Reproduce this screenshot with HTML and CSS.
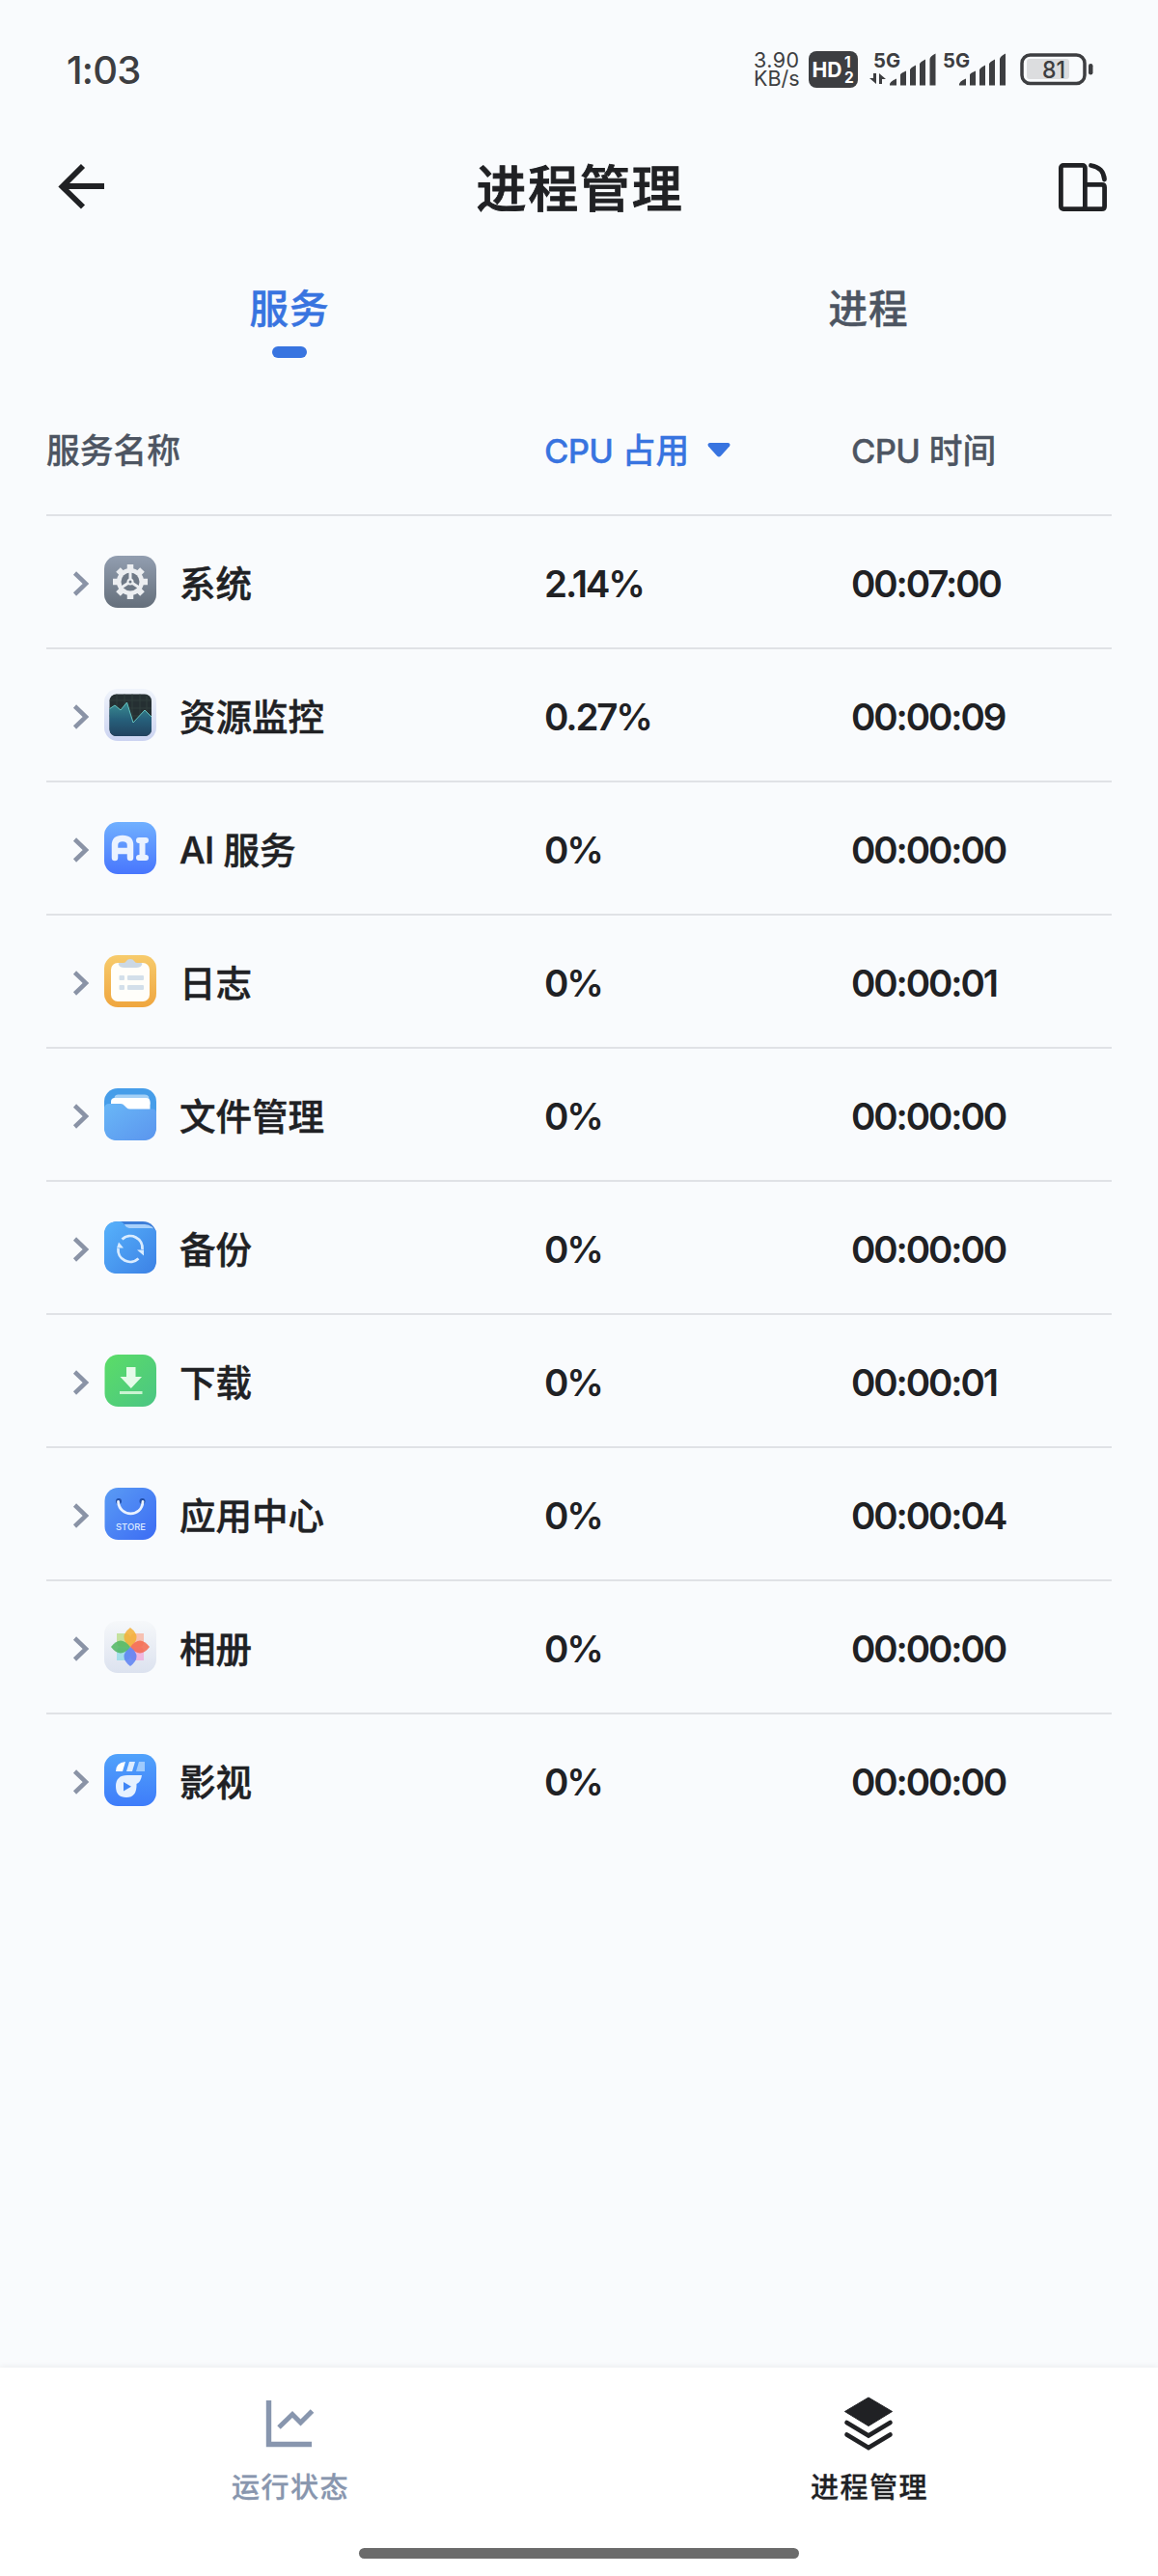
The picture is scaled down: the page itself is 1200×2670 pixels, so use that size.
FILE: index.html
```
<!DOCTYPE html>
<html lang="zh">
<head>
    <meta charset="UTF-8">
    <title>进程管理</title>
    <link rel="stylesheet" href="styles.css">
</head>
<body>
<div class="phone">
    <!-- 状态栏 -->
    <div class="status">
        <div class="clock">1:03</div>
        <div class="status_right">
            <div class="speed"><span class="num">3.90</span><span>KB/s</span></div>
            <svg class="hd" width="52" height="38" viewBox="0 0 52 38">
                <rect width="51" height="38" rx="8" fill="#3d3e41"/>
                <text x="3.5" y="27" font-size="21.5" textLength="31" lengthAdjust="spacingAndGlyphs">HD</text>
                <text x="37" y="16.500" font-size="15.500">1</text>
                <text x="37" y="33" font-size="15.500">2</text>
            </svg>
            <svg class="signal" width="70" height="36" viewBox="0 0 70 36">
                <text x="4" y="15.5" font-size="20" textLength="28" lengthAdjust="spacingAndGlyphs">5G</text>
                <path d="M0 27h4v-5h3v11zM10 22l7 6h-4v5h-3z"/>
                <path d="M21 34.500q-1-3.500 7-7v7zM32 34.500v-11q0-1.500 6-4v15zM42 34.500v-16q0-2 6-5v21zM52 34.500v-22q0-2 6-5v27zM62.500 34.500v-27q0-3 6-6v33z"/>
            </svg>
            <svg class="signal2" width="66" height="36" viewBox="0 0 66 36">
                <text x="0" y="15.500" font-size="20" textLength="28" lengthAdjust="spacingAndGlyphs">5G</text>
                <path d="M17 34.500q-1-3.500 7-7v7zM28 34.500v-11q0-1.500 6-4v15zM38 34.500v-16q0-2 6-5v21zM48 34.500v-22q0-2 6-5v27zM59 34.500v-27q0-3 6-6v33z"/>
            </svg>
            <svg class="battery" width="76" height="34" viewBox="0 0 76 34">
                <rect x="7" y="6" width="44" height="21" rx="3" fill="#dcdddf"/>
                <rect x="2" y="2" width="65" height="29.500" rx="8.500" fill="none" stroke="#3d3e41" stroke-width="3.500"/>
                <rect x="71" y="11" width="4.500" height="11.500" rx="2.200" fill="#3d3e41"/>
                <text x="35" y="25.500" font-size="24.500" text-anchor="middle" textLength="24" lengthAdjust="spacingAndGlyphs">81</text>
            </svg>
        </div>
    </div>

    <!-- 标题 -->
    <div class="header">
        <svg width="50" height="50" viewBox="0 0 50 50" fill="none" stroke="#202124" stroke-width="5.800">
            <path d="M5 24h43M26 3L4.500 24.500 26 45.500"/>
        </svg>
        <h1>进程管理</h1>
        <svg width="50" height="50" viewBox="0 0 50 50" fill="none" stroke="#202124" stroke-width="4.800">
            <rect x="2.400" y="2.400" width="25" height="45.200" rx="2.500"/>
            <path d="M27.400 22.400h17.400q2.800 0 2.800 2.800v19.600q0 2.800-2.800 2.800h-20"/>
            <path d="M33.500 2.500Q46.500 4.500 47.500 17" stroke-linecap="round"/>
        </svg>
    </div>

    <div class="tabs">
        <div class="tab active">服务</div>
        <div class="tab">进程</div>
    </div>

    <!-- 服务列表 -->
    <div class="list">
        <div class="row head">
            <div>服务名称</div>
            <div class="sort"><div><span class="en">CPU</span> 占用</div>
                <svg width="24" height="15" viewBox="0 0 24 15"><path d="M2.500 0h19q3 .5 1.500 3.500l-9 10q-2 2-4 0l-9-10q-1.500-3 1.500-3.500z" fill="#3874e0"/></svg>
            </div>
            <div><span class="en">CPU</span> 时间</div>
        </div>
        <div class="row">
            <div class="name">
                <svg class="arrow" width="16" height="26" viewBox="0 0 16 26"><path d="M1.500 2l11.500 11-11.500 11"/></svg>
                <svg class="icon" viewBox="0 0 54 54">
                    <defs>
                        <linearGradient id="sys" x1="0" y1="0" x2="0" y2="1"><stop offset="0" stop-color="#929eb0"/><stop offset="1" stop-color="#656f7b"/></linearGradient>
                    </defs>
                    <rect width="54" height="54" rx="14" fill="url(#sys)"/>
                    <g stroke="#eceef1" stroke-width="6.500" stroke-linejoin="round">
                        <path d="M27 9v36M9 27h36M14.500 14.500l25 25M39.500 14.500l-25 25"/>
                    </g>
                    <circle cx="27" cy="27" r="14" fill="#eceef1"/>
                    <circle cx="27" cy="27" r="9.500" fill="#6f7986"/>
                    <path d="M27 17v10M27 27l-8.500 5.500M27 27l8.500 5.500" stroke="#eceef1" stroke-width="3"/>
                    <circle cx="27" cy="27" r="3.500" fill="#eceef1"/>
                    <circle cx="27" cy="27" r="1.500" fill="#6f7986"/>
                </svg>
                <span>系统</span>
            </div>
            <div>2.14%</div>
            <div>00:07:00</div>
        </div>
        <div class="row">
            <div class="name">
                <svg class="arrow" width="16" height="26" viewBox="0 0 16 26"><path d="M1.500 2l11.500 11-11.500 11"/></svg>
                <svg class="icon" viewBox="0 0 54 54">
                    <defs>
                        <linearGradient id="mon" x1="0" y1="0" x2="0" y2="1"><stop offset="0" stop-color="#f0f4fb"/><stop offset="1" stop-color="#cbd3f1"/></linearGradient>
                        <linearGradient id="wave" x1="0" y1="0" x2="0" y2="1"><stop offset="0" stop-color="#3a8c91"/><stop offset=".5" stop-color="#265f7a"/><stop offset="1" stop-color="#22415e"/></linearGradient>
                        <clipPath id="monClip"><rect x="5.500" y="5.500" width="43.500" height="43.500" rx="7"/></clipPath>
                    </defs>
                    <rect width="54" height="54" rx="14" fill="url(#mon)"/>
                    <g clip-path="url(#monClip)">
                        <path d="M5 5h45v45H5z" fill="#252f32"/>
                        <path d="M5 12h45M5 20h45M5 28h45M13 5v30M21 5v30M29 5v30M37 5v30M44 5v30" stroke="#34433f" stroke-width=".8"/>
                        <path d="M5 21l6-4 6 5 6.500-8L30 35l12-13 8 8v20H5z" fill="url(#wave)"/>
                        <path d="M5 21l6-4 6 5 6.500-8L30 35l12-13 8 8" fill="none" stroke="#65c3c0" stroke-width="1"/>
                    </g>
                </svg>
                <span>资源监控</span>
            </div>
            <div>0.27%</div>
            <div>00:00:09</div>
        </div>
        <div class="row">
            <div class="name">
                <svg class="arrow" width="16" height="26" viewBox="0 0 16 26"><path d="M1.500 2l11.500 11-11.500 11"/></svg>
                <svg class="icon" viewBox="0 0 54 54">
                    <defs>
                        <linearGradient id="ai" x1="0" y1="0" x2="0" y2="1"><stop offset="0" stop-color="#70b0ff"/><stop offset="1" stop-color="#4876fd"/></linearGradient>
                    </defs>
                    <rect width="54" height="54" rx="14" fill="url(#ai)"/>
                    <g fill="none" stroke="#eaf2ff" stroke-width="6.500" stroke-linecap="round" stroke-linejoin="round">
                        <path d="M11 37V24q0-7 8-7t8 7v13M12 30h14"/>
                        <path d="M36 19h7M39.500 19v18M36 37h7" stroke-width="6"/>
                    </g>
                </svg>
                <span><span class="en">AI</span> 服务</span>
            </div>
            <div>0%</div>
            <div>00:00:00</div>
        </div>
        <div class="row">
            <div class="name">
                <svg class="arrow" width="16" height="26" viewBox="0 0 16 26"><path d="M1.500 2l11.500 11-11.500 11"/></svg>
                <svg class="icon" viewBox="0 0 54 54">
                    <defs>
                        <linearGradient id="log" x1="0" y1="0" x2="0" y2="1"><stop offset="0" stop-color="#f7cb6c"/><stop offset="1" stop-color="#efa63f"/></linearGradient>
                    </defs>
                    <rect width="54" height="54" rx="14" fill="url(#log)"/>
                    <rect x="7" y="8" width="40" height="40" rx="7" fill="#fffefa"/>
                    <path d="M16 8h4q2 0 3-2t4-2 4 2 3 2h4q2 0 1 2-1 3-6 3H21q-5 0-6-3-1-2 1-2z" fill="#cbd8e5"/>
                    <g fill="#d3dfea">
                        <rect x="15.500" y="21" width="5.500" height="5" rx="1"/>
                        <rect x="24" y="21" width="17" height="5" rx="1"/>
                        <rect x="15.500" y="31" width="5.500" height="5" rx="1"/>
                        <rect x="24" y="31" width="17" height="5" rx="1"/>
                    </g>
                </svg>
                <span>日志</span>
            </div>
            <div>0%</div>
            <div>00:00:01</div>
        </div>
        <div class="row">
            <div class="name">
                <svg class="arrow" width="16" height="26" viewBox="0 0 16 26"><path d="M1.500 2l11.500 11-11.500 11"/></svg>
                <svg class="icon" viewBox="0 0 54 54">
                    <defs>
                        <linearGradient id="file" x1="0" y1="0" x2="1" y2="1"><stop offset="0" stop-color="#69b7f7"/><stop offset="1" stop-color="#5b95ee"/></linearGradient>
                    </defs>
                    <rect width="54" height="54" rx="14" fill="#469de9"/>
                    <path d="M11 8q1-1.500 3-1.500h28q3 0 4 2l2 8H9z" fill="#a4d0f6"/>
                    <path d="M7 20v-6q0-4 4-4h32q4.500 0 4.500 4v9H7z" fill="#fff"/>
                    <path d="M0 20q1-4 5-4h12q2.500 0 4 2l2 2q1.500 1.500 4 1.500h23q4 0 4 4V40q0 14-14 14H14Q0 54 0 40z" fill="url(#file)"/>
                </svg>
                <span>文件管理</span>
            </div>
            <div>0%</div>
            <div>00:00:00</div>
        </div>
        <div class="row">
            <div class="name">
                <svg class="arrow" width="16" height="26" viewBox="0 0 16 26"><path d="M1.500 2l11.500 11-11.500 11"/></svg>
                <svg class="icon" viewBox="0 0 54 54">
                    <defs>
                        <linearGradient id="bak" x1="0" y1="0" x2="1" y2="1"><stop offset="0" stop-color="#57b2fb"/><stop offset="1" stop-color="#3c81e5"/></linearGradient>
                    </defs>
                    <rect width="54" height="54" rx="14" fill="#3e7ed8"/>
                    <path d="M21 3h21q5 0 9 4v3H23z" fill="#a9d1fb"/>
                    <path d="M0 14Q0 0 14 0h2q3 0 5 3.500T26 7h22q6 0 6 5v28q0 14-14 14H14Q0 54 0 40z" fill="url(#bak)"/>
                    <g fill="none" stroke="#d9ecff" stroke-width="2.800">
                        <path d="M18.500 18.500A12.500 12.500 0 0 1 39.500 29"/>
                        <path d="M35.500 38.500A12.500 12.500 0 0 1 14.500 28"/>
                    </g>
                    <path d="M34 29.500h7v6zM20 27.500h-7l2-6z" fill="#d9ecff"/>
                </svg>
                <span>备份</span>
            </div>
            <div>0%</div>
            <div>00:00:00</div>
        </div>
        <div class="row">
            <div class="name">
                <svg class="arrow" width="16" height="26" viewBox="0 0 16 26"><path d="M1.500 2l11.500 11-11.500 11"/></svg>
                <svg class="icon" viewBox="0 0 54 54">
                    <defs>
                        <linearGradient id="down" x1="0" y1="0" x2="1" y2="1"><stop offset="0" stop-color="#5bdd67"/><stop offset="1" stop-color="#4bc584"/></linearGradient>
                    </defs>
                    <rect x=".5" width="53.500" height="54" rx="14" fill="url(#down)"/>
                    <path d="M23 13h9.500v10h6.500L27.800 35 16.500 23H23z" fill="#e6fbe9"/>
                    <rect x="16" y="38" width="23.500" height="3" fill="#c9f3d2"/>
                </svg>
                <span>下载</span>
            </div>
            <div>0%</div>
            <div>00:00:01</div>
        </div>
        <div class="row">
            <div class="name">
                <svg class="arrow" width="16" height="26" viewBox="0 0 16 26"><path d="M1.500 2l11.500 11-11.500 11"/></svg>
                <svg class="icon" viewBox="0 0 54 54">
                    <defs>
                        <linearGradient id="store" x1="0" y1="0" x2="1" y2="1"><stop offset="0" stop-color="#5a9bf4"/><stop offset="1" stop-color="#3c6cf4"/></linearGradient>
                    </defs>
                    <rect x=".5" width="53.500" height="54" rx="14" fill="url(#store)"/>
                    <circle cx="15" cy="14" r="3" fill="#2450a8"/>
                    <circle cx="39.500" cy="14" r="3" fill="#2450a8"/>
                    <path d="M14.500 14.500C16 31 39 31 40 14.500" fill="none" stroke="#eaf2ff" stroke-width="2.800" stroke-linecap="round"/>
                    <text class="store_text" x="27.500" y="44" textLength="31" lengthAdjust="spacingAndGlyphs">STORE</text>
                </svg>
                <span>应用中心</span>
            </div>
            <div>0%</div>
            <div>00:00:04</div>
        </div>
        <div class="row">
            <div class="name">
                <svg class="arrow" width="16" height="26" viewBox="0 0 16 26"><path d="M1.500 2l11.500 11-11.500 11"/></svg>
                <svg class="icon" viewBox="0 0 54 54">
                    <defs>
                        <linearGradient id="photo" x1="0" y1="0" x2="0" y2="1"><stop offset="0" stop-color="#f6f8fa"/><stop offset="1" stop-color="#dce2ef"/></linearGradient>
                    </defs>
                    <rect width="54" height="54" rx="14" fill="url(#photo)"/>
                    <g fill-opacity=".75">
                        <path d="M27 27H18q-5 0-5-5v-9h9q5 0 5 5z" fill="#b7dc82"/>
                        <path d="M27 27V18q0-5 5-5h9v9q0 5-5 5z" fill="#f9b09b"/>
                        <path d="M27 27h9q5 0 5 5v9h-9q-5 0-5-5z" fill="#f3a5d8"/>
                        <path d="M27 27v9q0 5-5 5h-9v-9q0-5 5-5z" fill="#8edbe8"/>
                    </g>
                    <g fill-opacity=".85">
                        <path d="M27 27q-13-10 0-20 13 10 0 20z" fill="#f5af35"/>
                        <path d="M27 27q10-13 20 0-10 13-20 0z" fill="#f4694d"/>
                        <path d="M27 27q13 10 0 20-13-10 0-20z" fill="#5a80f3"/>
                        <path d="M27 27q-10 13-20 0 10-13 20 0z" fill="#50b661"/>
                    </g>
                </svg>
                <span>相册</span>
            </div>
            <div>0%</div>
            <div>00:00:00</div>
        </div>
        <div class="row last">
            <div class="name">
                <svg class="arrow" width="16" height="26" viewBox="0 0 16 26"><path d="M1.500 2l11.500 11-11.500 11"/></svg>
                <svg class="icon" viewBox="0 0 54 54">
                    <defs>
                        <linearGradient id="video" x1="0" y1="0" x2="0" y2="1"><stop offset="0" stop-color="#51a2fb"/><stop offset="1" stop-color="#3e7cfa"/></linearGradient>
                    </defs>
                    <rect width="54" height="54" rx="14" fill="url(#video)"/>
                    <path d="M12 18q0-9 10-10l-3 10z" fill="#fff"/>
                    <path d="M26 8h6l-3 10h-6z" fill="#dcecff"/>
                    <path d="M36 8h6v10h-9z" fill="#9fcbfd"/>
                    <path d="M39 22q-1 7-5.500 9 .5 14-10.500 14-11 0-11-11.500T24 22z" fill="#e6f1ff"/>
                    <path d="M20 29v9.500l8-4.700z" fill="#3f85f6"/>
                </svg>
                <span>影视</span>
            </div>
            <div>0%</div>
            <div>00:00:00</div>
        </div>
    </div>

    <!-- 底部导航 -->
    <div class="nav">
        <div class="nav_items">
            <div class="nav_item">
                <svg width="50" height="56" viewBox="0 0 50 56" fill="none" stroke="#8896ae">
                    <path d="M3.500 4v45.500H48" stroke-width="5.400"/>
                    <path d="M14 32l14-13.500 8.500 8.500L48.500 15" stroke-width="5"/>
                </svg>
                <span>运行状态</span>
            </div>
            <div class="nav_item on">
                <svg width="50" height="56" viewBox="0 0 50 56">
                    <path d="M25 1l24.500 14.500L25 30.500.5 15.500z" fill="#202124" stroke="#202124" stroke-linejoin="round"/>
                    <path d="M2.500 27L25 40.500 47.500 27M2.500 39.500L25 53 47.500 39.500" fill="none" stroke="#202124" stroke-width="4.600" stroke-linecap="round"/>
                </svg>
                <span>进程管理</span>
            </div>
        </div>
        <div class="home_bar"></div>
    </div>
</div>
</body>
</html>
```

FILE: styles.css
```
body {
    margin: 0;
    background-color: #f9fbfd;
    color: #202124;
    font-family: Inter, "Noto Sans CJK SC", sans-serif;
}

.phone {
    width: 1200px;
    height: 2670px;
    display: flex;
    flex-direction: column;
}

svg {
    display: block;
    flex: none;
    overflow: visible;
}

/* 状态栏 */
.status {
    height: 144px;
    display: flex;
    justify-content: space-between;
    padding: 0 67px 0 69px;
    box-sizing: border-box;
    color: #3d3e41;
}

.clock {
    font-size: 40px;
    font-weight: 500;
    line-height: 145px;
    letter-spacing: -.8px;
}

.status_right {
    display: flex;
    align-items: center;
}

.status_right text {
    font-weight: 700;
    fill: #3d3e41;
}

.speed {
    display: flex;
    flex-direction: column;
    font-size: 21.500px;
    line-height: 19px;
    width: 57px;
}

.speed .num {
    letter-spacing: .4px;
}

.hd {
    margin-right: 11px;
}

.hd text {
    fill: #fff;
}

.signal {
    margin-right: 6px;
}

.signal2 {
    margin-right: 14px;
}

.signal path, .signal2 path {
    fill: #3d3e41;
}

.status_right .battery text {
    font-weight: 500;
}

/* 标题 */
.header {
    height: 106px;
    display: flex;
    align-items: center;
    padding: 0 53px 6px 60px;
    box-sizing: border-box;
}

.header h1 {
    flex: 1;
    margin: 5px 0 0;
    padding-right: 5px;
    text-align: center;
    font-size: 52px;
    font-weight: 500;
    line-height: 60px;
    letter-spacing: 1.700px;
    -webkit-text-stroke: .9px;
}

/* 标签页 */
.tabs {
    display: flex;
    height: 150px;
}

.tab {
    flex: 1;
    display: flex;
    flex-direction: column;
    align-items: center;
    padding-top: 41px;
    color: #4d5562;
    font-size: 40.500px;
    font-weight: 500;
    line-height: 60px;
    letter-spacing: 1px;
    -webkit-text-stroke: .5px;
}

.tab.active {
    color: #3874e0;
}

.tab.active::after {
    content: "";
    width: 36px;
    height: 12px;
    margin-top: 8px;
    border-radius: 6px;
    background-color: #3874e0;
}

/* 列表 */
.list {
    flex: 1;
    padding: 0 48px;
}

.row {
    display: grid;
    grid-template-columns: 516px 318px 1fr;
    align-items: center;
    height: 138px;
    box-sizing: border-box;
    border-bottom: 2px solid #e0e2e6;
    font-size: 38.500px;
    font-weight: 600;
    line-height: 50px;
    letter-spacing: -2.100px;
}

.row > div {
    padding-top: 4px;
}

.row.head {
    height: 135px;
    font-size: 34.700px;
    font-weight: 500;
    color: #4d5562;
    letter-spacing: .1px;
    -webkit-text-stroke: .3px;
}

.row.head > div {
    padding-top: 0;
}

.row.last {
    border-bottom-color: transparent;
}

.row .sort {
    display: flex;
    align-items: center;
    gap: 19px;
    color: #3874e0;
}

.en {
    letter-spacing: -.7px;
}

.row .name {
    display: flex;
    align-items: center;
    padding-left: 28px;
    font-size: 37.500px;
    font-weight: 500;
    letter-spacing: 0;
    -webkit-text-stroke: .5px;
}

.name > span {
    padding-top: 2px;
}

.arrow {
    fill: none;
    stroke: #8a93a6;
    stroke-width: 4.500;
}

.icon {
    width: 54px;
    height: 54px;
    margin: -4px 24px 0 16px;
}

.store_text {
    font-size: 9.500px;
    font-weight: 500;
    fill: #dce9ff;
    text-anchor: middle;
    -webkit-text-stroke: 0;
}

/* 底部导航 */
.nav {
    height: 216px;
    background-color: #fff;
    box-shadow: 0 -2px 6px rgba(0, 0, 0, .05);
    display: flex;
    flex-direction: column;
    align-items: center;
}

.nav_items {
    display: flex;
    width: 100%;
    height: 187px;
}

.nav_item {
    flex: 1;
    display: flex;
    flex-direction: column;
    align-items: center;
    padding-top: 30px;
    color: #8896ae;
    font-size: 29px;
    font-weight: 500;
    line-height: 40px;
    letter-spacing: 1.500px;
    -webkit-text-stroke: .3px;
}

.nav_item span {
    margin: 19px 0 0 2px;
}

.nav_item.on {
    color: #202124;
}

.home_bar {
    width: 456px;
    height: 11px;
    border-radius: 6px;
    background-color: #6b6b6b;
}
```
